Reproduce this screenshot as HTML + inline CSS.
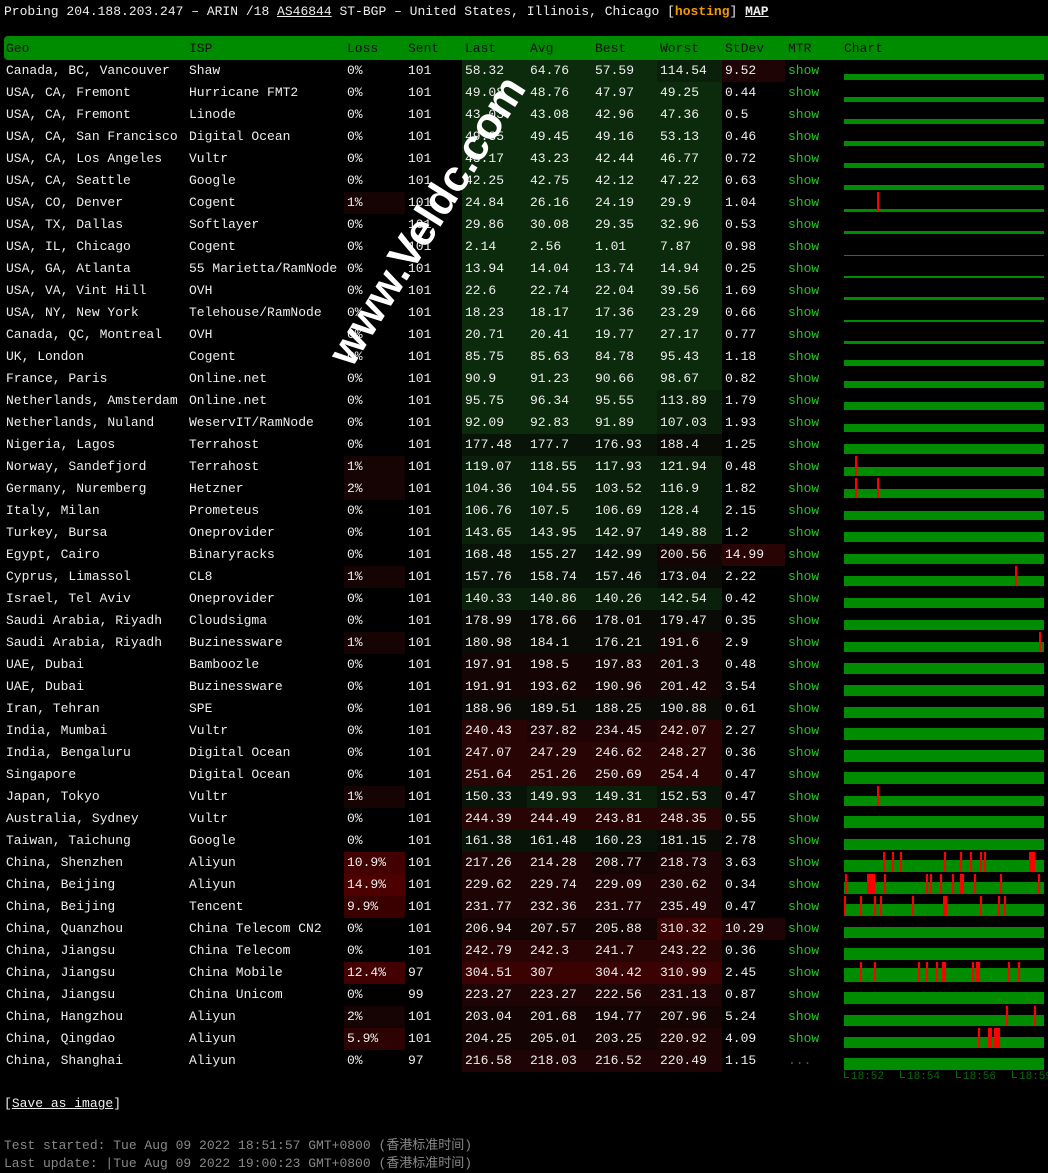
<!DOCTYPE html>
<html><head><meta charset="utf-8"><style>
body{margin:0;background:#000;color:#eee;font-family:"Liberation Mono","Noto Sans CJK SC",monospace;font-size:13px;width:1048px;height:1167px;overflow:hidden;position:relative}
.t{position:absolute;left:4px;top:3px;white-space:pre;line-height:18px}
.t u{text-decoration:underline}
.hs{color:#f39a00;font-weight:bold}
#tb{position:absolute;left:4px;top:36px;width:1044px}
.r{display:flex;height:22px;line-height:22px;white-space:pre}
.h{height:24px;line-height:25px;background:#008c00;color:#111;border-radius:4px 0 0 4px}
.r>span{display:block;padding-left:3px;box-sizing:border-box;overflow:visible}
.c0{width:182px;padding-left:2px!important}.c1{width:158px}.c2{width:61px}.c3{width:57px}
.c4,.c5,.c6,.c7{width:65px}.c8{width:63px}.c9{width:56px;color:#1fc81f}.c10{width:204px;position:relative}
.g3{background:#0c2a0c}.g2{background:#0a200a}.g1{background:#081408}.n{background:#0a0a06}
.r1{background:#140404}.r2{background:#1e0404}.r3{background:#280404}.r4{background:#3a0202}
.l1{background:#160404}.l5{background:#2c0202}.l9{background:#3a0000}.l10{background:#420000}.l14{background:#4c0000}
.b{position:absolute;left:3px;width:200px;bottom:2px;background:#008c00}
.s{position:absolute;bottom:2px;height:20px;width:2px;background:#f00}
.tl{position:absolute;top:1071px;color:#0a6a0a;font-size:11px;padding-left:7px;line-height:12px}
.tl:before{content:"";position:absolute;left:0;top:0;width:4px;height:6px;border-left:1px solid #0a6a0a;border-bottom:1px solid #0a6a0a}
.wm{position:absolute;left:262px;top:196px;transform:rotate(-58deg);font-size:44px;font-weight:bold;color:#fff;font-family:"Liberation Sans",sans-serif;white-space:nowrap}
</style></head><body>
<div class="t">Probing 204.188.203.247 – ARIN /18 <u>AS46844</u> ST-BGP – United States, Illinois, Chicago [<span class="hs">hosting</span>] <b><u>MAP</u></b></div>
<div id="tb">
<div class="r h"><span class="c0">Geo</span><span class="c1">ISP</span><span class="c2">Loss</span><span class="c3">Sent</span><span class="c4">Last</span><span class="c5">Avg</span><span class="c6">Best</span><span class="c7">Worst</span><span class="c8">StDev</span><span class="c9" style="color:#111">MTR</span><span class="c10">Chart</span></div>
<div class="r"><span class="c0">Canada, BC, Vancouver</span><span class="c1">Shaw</span><span class="c2">0%</span><span class="c3">101</span><span class="c4 g3">58.32</span><span class="c5 g3">64.76</span><span class="c6 g3">57.59</span><span class="c7 g2">114.54</span><span class="c8 r2">9.52</span><span class="c9">show</span><span class="c10"><i class="b" style="height:6px"></i></span></div>
<div class="r"><span class="c0">USA, CA, Fremont</span><span class="c1">Hurricane FMT2</span><span class="c2">0%</span><span class="c3">101</span><span class="c4 g3">49.08</span><span class="c5 g3">48.76</span><span class="c6 g3">47.97</span><span class="c7 g3">49.25</span><span class="c8">0.44</span><span class="c9">show</span><span class="c10"><i class="b" style="height:5px"></i></span></div>
<div class="r"><span class="c0">USA, CA, Fremont</span><span class="c1">Linode</span><span class="c2">0%</span><span class="c3">101</span><span class="c4 g3">43.03</span><span class="c5 g3">43.08</span><span class="c6 g3">42.96</span><span class="c7 g3">47.36</span><span class="c8">0.5</span><span class="c9">show</span><span class="c10"><i class="b" style="height:5px"></i></span></div>
<div class="r"><span class="c0">USA, CA, San Francisco</span><span class="c1">Digital Ocean</span><span class="c2">0%</span><span class="c3">101</span><span class="c4 g3">49.35</span><span class="c5 g3">49.45</span><span class="c6 g3">49.16</span><span class="c7 g3">53.13</span><span class="c8">0.46</span><span class="c9">show</span><span class="c10"><i class="b" style="height:5px"></i></span></div>
<div class="r"><span class="c0">USA, CA, Los Angeles</span><span class="c1">Vultr</span><span class="c2">0%</span><span class="c3">101</span><span class="c4 g3">43.17</span><span class="c5 g3">43.23</span><span class="c6 g3">42.44</span><span class="c7 g3">46.77</span><span class="c8">0.72</span><span class="c9">show</span><span class="c10"><i class="b" style="height:5px"></i></span></div>
<div class="r"><span class="c0">USA, CA, Seattle</span><span class="c1">Google</span><span class="c2">0%</span><span class="c3">101</span><span class="c4 g3">42.25</span><span class="c5 g3">42.75</span><span class="c6 g3">42.12</span><span class="c7 g3">47.22</span><span class="c8">0.63</span><span class="c9">show</span><span class="c10"><i class="b" style="height:5px"></i></span></div>
<div class="r"><span class="c0">USA, CO, Denver</span><span class="c1">Cogent</span><span class="c2 l1">1%</span><span class="c3">101</span><span class="c4 g3">24.84</span><span class="c5 g3">26.16</span><span class="c6 g3">24.19</span><span class="c7 g3">29.9</span><span class="c8">1.04</span><span class="c9">show</span><span class="c10"><i class="b" style="height:3px"></i><i class="s" style="left:36px"></i></span></div>
<div class="r"><span class="c0">USA, TX, Dallas</span><span class="c1">Softlayer</span><span class="c2">0%</span><span class="c3">101</span><span class="c4 g3">29.86</span><span class="c5 g3">30.08</span><span class="c6 g3">29.35</span><span class="c7 g3">32.96</span><span class="c8">0.53</span><span class="c9">show</span><span class="c10"><i class="b" style="height:3px"></i></span></div>
<div class="r"><span class="c0">USA, IL, Chicago</span><span class="c1">Cogent</span><span class="c2">0%</span><span class="c3">101</span><span class="c4 g3">2.14</span><span class="c5 g3">2.56</span><span class="c6 g3">1.01</span><span class="c7 g3">7.87</span><span class="c8">0.98</span><span class="c9">show</span><span class="c10"><i class="b" style="height:1px"></i></span></div>
<div class="r"><span class="c0">USA, GA, Atlanta</span><span class="c1">55 Marietta/RamNode</span><span class="c2">0%</span><span class="c3">101</span><span class="c4 g3">13.94</span><span class="c5 g3">14.04</span><span class="c6 g3">13.74</span><span class="c7 g3">14.94</span><span class="c8">0.25</span><span class="c9">show</span><span class="c10"><i class="b" style="height:2px"></i></span></div>
<div class="r"><span class="c0">USA, VA, Vint Hill</span><span class="c1">OVH</span><span class="c2">0%</span><span class="c3">101</span><span class="c4 g3">22.6</span><span class="c5 g3">22.74</span><span class="c6 g3">22.04</span><span class="c7 g3">39.56</span><span class="c8">1.69</span><span class="c9">show</span><span class="c10"><i class="b" style="height:3px"></i></span></div>
<div class="r"><span class="c0">USA, NY, New York</span><span class="c1">Telehouse/RamNode</span><span class="c2">0%</span><span class="c3">101</span><span class="c4 g3">18.23</span><span class="c5 g3">18.17</span><span class="c6 g3">17.36</span><span class="c7 g3">23.29</span><span class="c8">0.66</span><span class="c9">show</span><span class="c10"><i class="b" style="height:2px"></i></span></div>
<div class="r"><span class="c0">Canada, QC, Montreal</span><span class="c1">OVH</span><span class="c2">0%</span><span class="c3">101</span><span class="c4 g3">20.71</span><span class="c5 g3">20.41</span><span class="c6 g3">19.77</span><span class="c7 g3">27.17</span><span class="c8">0.77</span><span class="c9">show</span><span class="c10"><i class="b" style="height:3px"></i></span></div>
<div class="r"><span class="c0">UK, London</span><span class="c1">Cogent</span><span class="c2">0%</span><span class="c3">101</span><span class="c4 g3">85.75</span><span class="c5 g3">85.63</span><span class="c6 g3">84.78</span><span class="c7 g3">95.43</span><span class="c8">1.18</span><span class="c9">show</span><span class="c10"><i class="b" style="height:6px"></i></span></div>
<div class="r"><span class="c0">France, Paris</span><span class="c1">Online.net</span><span class="c2">0%</span><span class="c3">101</span><span class="c4 g3">90.9</span><span class="c5 g3">91.23</span><span class="c6 g3">90.66</span><span class="c7 g3">98.67</span><span class="c8">0.82</span><span class="c9">show</span><span class="c10"><i class="b" style="height:7px"></i></span></div>
<div class="r"><span class="c0">Netherlands, Amsterdam</span><span class="c1">Online.net</span><span class="c2">0%</span><span class="c3">101</span><span class="c4 g3">95.75</span><span class="c5 g3">96.34</span><span class="c6 g3">95.55</span><span class="c7 g2">113.89</span><span class="c8">1.79</span><span class="c9">show</span><span class="c10"><i class="b" style="height:8px"></i></span></div>
<div class="r"><span class="c0">Netherlands, Nuland</span><span class="c1">WeservIT/RamNode</span><span class="c2">0%</span><span class="c3">101</span><span class="c4 g3">92.09</span><span class="c5 g3">92.83</span><span class="c6 g3">91.89</span><span class="c7 g2">107.03</span><span class="c8">1.93</span><span class="c9">show</span><span class="c10"><i class="b" style="height:8px"></i></span></div>
<div class="r"><span class="c0">Nigeria, Lagos</span><span class="c1">Terrahost</span><span class="c2">0%</span><span class="c3">101</span><span class="c4 g1">177.48</span><span class="c5 g1">177.7</span><span class="c6 g1">176.93</span><span class="c7 n">188.4</span><span class="c8">1.25</span><span class="c9">show</span><span class="c10"><i class="b" style="height:10px"></i></span></div>
<div class="r"><span class="c0">Norway, Sandefjord</span><span class="c1">Terrahost</span><span class="c2 l1">1%</span><span class="c3">101</span><span class="c4 g2">119.07</span><span class="c5 g2">118.55</span><span class="c6 g2">117.93</span><span class="c7 g2">121.94</span><span class="c8">0.48</span><span class="c9">show</span><span class="c10"><i class="b" style="height:9px"></i><i class="s" style="left:14px"></i></span></div>
<div class="r"><span class="c0">Germany, Nuremberg</span><span class="c1">Hetzner</span><span class="c2 l1">2%</span><span class="c3">101</span><span class="c4 g2">104.36</span><span class="c5 g2">104.55</span><span class="c6 g2">103.52</span><span class="c7 g2">116.9</span><span class="c8">1.82</span><span class="c9">show</span><span class="c10"><i class="b" style="height:9px"></i><i class="s" style="left:14px"></i><i class="s" style="left:36px"></i></span></div>
<div class="r"><span class="c0">Italy, Milan</span><span class="c1">Prometeus</span><span class="c2">0%</span><span class="c3">101</span><span class="c4 g2">106.76</span><span class="c5 g2">107.5</span><span class="c6 g2">106.69</span><span class="c7 g2">128.4</span><span class="c8">2.15</span><span class="c9">show</span><span class="c10"><i class="b" style="height:9px"></i></span></div>
<div class="r"><span class="c0">Turkey, Bursa</span><span class="c1">Oneprovider</span><span class="c2">0%</span><span class="c3">101</span><span class="c4 g2">143.65</span><span class="c5 g2">143.95</span><span class="c6 g2">142.97</span><span class="c7 g2">149.88</span><span class="c8">1.2</span><span class="c9">show</span><span class="c10"><i class="b" style="height:10px"></i></span></div>
<div class="r"><span class="c0">Egypt, Cairo</span><span class="c1">Binaryracks</span><span class="c2">0%</span><span class="c3">101</span><span class="c4 g1">168.48</span><span class="c5 g1">155.27</span><span class="c6 g1">142.99</span><span class="c7 r1">200.56</span><span class="c8 r3">14.99</span><span class="c9">show</span><span class="c10"><i class="b" style="height:10px"></i></span></div>
<div class="r"><span class="c0">Cyprus, Limassol</span><span class="c1">CL8</span><span class="c2 l1">1%</span><span class="c3">101</span><span class="c4 g1">157.76</span><span class="c5 g1">158.74</span><span class="c6 g1">157.46</span><span class="c7 n">173.04</span><span class="c8">2.22</span><span class="c9">show</span><span class="c10"><i class="b" style="height:10px"></i><i class="s" style="left:174px"></i></span></div>
<div class="r"><span class="c0">Israel, Tel Aviv</span><span class="c1">Oneprovider</span><span class="c2">0%</span><span class="c3">101</span><span class="c4 g2">140.33</span><span class="c5 g2">140.86</span><span class="c6 g2">140.26</span><span class="c7 g2">142.54</span><span class="c8">0.42</span><span class="c9">show</span><span class="c10"><i class="b" style="height:10px"></i></span></div>
<div class="r"><span class="c0">Saudi Arabia, Riyadh</span><span class="c1">Cloudsigma</span><span class="c2">0%</span><span class="c3">101</span><span class="c4 n">178.99</span><span class="c5 n">178.66</span><span class="c6 n">178.01</span><span class="c7 n">179.47</span><span class="c8">0.35</span><span class="c9">show</span><span class="c10"><i class="b" style="height:10px"></i></span></div>
<div class="r"><span class="c0">Saudi Arabia, Riyadh</span><span class="c1">Buzinessware</span><span class="c2 l1">1%</span><span class="c3">101</span><span class="c4 n">180.98</span><span class="c5 n">184.1</span><span class="c6 n">176.21</span><span class="c7 r1">191.6</span><span class="c8">2.9</span><span class="c9">show</span><span class="c10"><i class="b" style="height:10px"></i><i class="s" style="left:198px"></i></span></div>
<div class="r"><span class="c0">UAE, Dubai</span><span class="c1">Bamboozle</span><span class="c2">0%</span><span class="c3">101</span><span class="c4 r1">197.91</span><span class="c5 r1">198.5</span><span class="c6 r1">197.83</span><span class="c7 r1">201.3</span><span class="c8">0.48</span><span class="c9">show</span><span class="c10"><i class="b" style="height:11px"></i></span></div>
<div class="r"><span class="c0">UAE, Dubai</span><span class="c1">Buzinessware</span><span class="c2">0%</span><span class="c3">101</span><span class="c4 r1">191.91</span><span class="c5 r1">193.62</span><span class="c6 r1">190.96</span><span class="c7 r1">201.42</span><span class="c8">3.54</span><span class="c9">show</span><span class="c10"><i class="b" style="height:11px"></i></span></div>
<div class="r"><span class="c0">Iran, Tehran</span><span class="c1">SPE</span><span class="c2">0%</span><span class="c3">101</span><span class="c4 n">188.96</span><span class="c5 n">189.51</span><span class="c6 n">188.25</span><span class="c7 n">190.88</span><span class="c8">0.61</span><span class="c9">show</span><span class="c10"><i class="b" style="height:11px"></i></span></div>
<div class="r"><span class="c0">India, Mumbai</span><span class="c1">Vultr</span><span class="c2">0%</span><span class="c3">101</span><span class="c4 r3">240.43</span><span class="c5 r2">237.82</span><span class="c6 r2">234.45</span><span class="c7 r3">242.07</span><span class="c8">2.27</span><span class="c9">show</span><span class="c10"><i class="b" style="height:12px"></i></span></div>
<div class="r"><span class="c0">India, Bengaluru</span><span class="c1">Digital Ocean</span><span class="c2">0%</span><span class="c3">101</span><span class="c4 r3">247.07</span><span class="c5 r3">247.29</span><span class="c6 r3">246.62</span><span class="c7 r3">248.27</span><span class="c8">0.36</span><span class="c9">show</span><span class="c10"><i class="b" style="height:12px"></i></span></div>
<div class="r"><span class="c0">Singapore</span><span class="c1">Digital Ocean</span><span class="c2">0%</span><span class="c3">101</span><span class="c4 r3">251.64</span><span class="c5 r3">251.26</span><span class="c6 r3">250.69</span><span class="c7 r3">254.4</span><span class="c8">0.47</span><span class="c9">show</span><span class="c10"><i class="b" style="height:12px"></i></span></div>
<div class="r"><span class="c0">Japan, Tokyo</span><span class="c1">Vultr</span><span class="c2 l1">1%</span><span class="c3">101</span><span class="c4 g1">150.33</span><span class="c5 g2">149.93</span><span class="c6 g2">149.31</span><span class="c7 g1">152.53</span><span class="c8">0.47</span><span class="c9">show</span><span class="c10"><i class="b" style="height:10px"></i><i class="s" style="left:36px"></i></span></div>
<div class="r"><span class="c0">Australia, Sydney</span><span class="c1">Vultr</span><span class="c2">0%</span><span class="c3">101</span><span class="c4 r3">244.39</span><span class="c5 r3">244.49</span><span class="c6 r3">243.81</span><span class="c7 r3">248.35</span><span class="c8">0.55</span><span class="c9">show</span><span class="c10"><i class="b" style="height:12px"></i></span></div>
<div class="r"><span class="c0">Taiwan, Taichung</span><span class="c1">Google</span><span class="c2">0%</span><span class="c3">101</span><span class="c4 g1">161.38</span><span class="c5 g1">161.48</span><span class="c6 g1">160.23</span><span class="c7 n">181.15</span><span class="c8">2.78</span><span class="c9">show</span><span class="c10"><i class="b" style="height:11px"></i></span></div>
<div class="r"><span class="c0">China, Shenzhen</span><span class="c1">Aliyun</span><span class="c2 l10">10.9%</span><span class="c3">101</span><span class="c4 r2">217.26</span><span class="c5 r2">214.28</span><span class="c6 r1">208.77</span><span class="c7 r2">218.73</span><span class="c8">3.63</span><span class="c9">show</span><span class="c10"><i class="b" style="height:12px"></i><i class="s" style="left:42px"></i><i class="s" style="left:51px"></i><i class="s" style="left:59px"></i><i class="s" style="left:103px"></i><i class="s" style="left:119px"></i><i class="s" style="left:129px"></i><i class="s" style="left:139px"></i><i class="s" style="left:143px"></i><i class="s" style="left:188px;width:6px"></i></span></div>
<div class="r"><span class="c0">China, Beijing</span><span class="c1">Aliyun</span><span class="c2 l14">14.9%</span><span class="c3">101</span><span class="c4 r2">229.62</span><span class="c5 r2">229.74</span><span class="c6 r2">229.09</span><span class="c7 r2">230.62</span><span class="c8">0.34</span><span class="c9">show</span><span class="c10"><i class="b" style="height:12px"></i><i class="s" style="left:4px"></i><i class="s" style="left:26px;width:8px"></i><i class="s" style="left:43px"></i><i class="s" style="left:85px"></i><i class="s" style="left:89px"></i><i class="s" style="left:99px"></i><i class="s" style="left:111px"></i><i class="s" style="left:119px;width:4px"></i><i class="s" style="left:133px"></i><i class="s" style="left:159px"></i><i class="s" style="left:197px"></i></span></div>
<div class="r"><span class="c0">China, Beijing</span><span class="c1">Tencent</span><span class="c2 l9">9.9%</span><span class="c3">101</span><span class="c4 r2">231.77</span><span class="c5 r2">232.36</span><span class="c6 r2">231.77</span><span class="c7 r2">235.49</span><span class="c8">0.47</span><span class="c9">show</span><span class="c10"><i class="b" style="height:12px"></i><i class="s" style="left:3px"></i><i class="s" style="left:19px"></i><i class="s" style="left:33px"></i><i class="s" style="left:39px"></i><i class="s" style="left:71px"></i><i class="s" style="left:102px;width:4px"></i><i class="s" style="left:139px"></i><i class="s" style="left:157px"></i><i class="s" style="left:163px"></i></span></div>
<div class="r"><span class="c0">China, Quanzhou</span><span class="c1">China Telecom CN2</span><span class="c2">0%</span><span class="c3">101</span><span class="c4 r1">206.94</span><span class="c5 r1">207.57</span><span class="c6 r1">205.88</span><span class="c7 r4">310.32</span><span class="c8 r2">10.29</span><span class="c9">show</span><span class="c10"><i class="b" style="height:11px"></i></span></div>
<div class="r"><span class="c0">China, Jiangsu</span><span class="c1">China Telecom</span><span class="c2">0%</span><span class="c3">101</span><span class="c4 r3">242.79</span><span class="c5 r3">242.3</span><span class="c6 r3">241.7</span><span class="c7 r3">243.22</span><span class="c8">0.36</span><span class="c9">show</span><span class="c10"><i class="b" style="height:12px"></i></span></div>
<div class="r"><span class="c0">China, Jiangsu</span><span class="c1">China Mobile</span><span class="c2 l10">12.4%</span><span class="c3">97</span><span class="c4 r4">304.51</span><span class="c5 r4">307</span><span class="c6 r4">304.42</span><span class="c7 r4">310.99</span><span class="c8">2.45</span><span class="c9">show</span><span class="c10"><i class="b" style="height:14px"></i><i class="s" style="left:19px"></i><i class="s" style="left:33px"></i><i class="s" style="left:77px"></i><i class="s" style="left:85px"></i><i class="s" style="left:95px"></i><i class="s" style="left:101px;width:4px"></i><i class="s" style="left:131px"></i><i class="s" style="left:135px;width:4px"></i><i class="s" style="left:167px"></i><i class="s" style="left:177px"></i></span></div>
<div class="r"><span class="c0">China, Jiangsu</span><span class="c1">China Unicom</span><span class="c2">0%</span><span class="c3">99</span><span class="c4 r2">223.27</span><span class="c5 r2">223.27</span><span class="c6 r2">222.56</span><span class="c7 r2">231.13</span><span class="c8">0.87</span><span class="c9">show</span><span class="c10"><i class="b" style="height:12px"></i></span></div>
<div class="r"><span class="c0">China, Hangzhou</span><span class="c1">Aliyun</span><span class="c2 l1">2%</span><span class="c3">101</span><span class="c4 r1">203.04</span><span class="c5 r1">201.68</span><span class="c6 r1">194.77</span><span class="c7 r1">207.96</span><span class="c8">5.24</span><span class="c9">show</span><span class="c10"><i class="b" style="height:11px"></i><i class="s" style="left:165px"></i><i class="s" style="left:193px"></i></span></div>
<div class="r"><span class="c0">China, Qingdao</span><span class="c1">Aliyun</span><span class="c2 l5">5.9%</span><span class="c3">101</span><span class="c4 r1">204.25</span><span class="c5 r1">205.01</span><span class="c6 r1">203.25</span><span class="c7 r2">220.92</span><span class="c8">4.09</span><span class="c9">show</span><span class="c10"><i class="b" style="height:11px"></i><i class="s" style="left:137px"></i><i class="s" style="left:147px;width:4px"></i><i class="s" style="left:153px;width:6px"></i></span></div>
<div class="r"><span class="c0">China, Shanghai</span><span class="c1">Aliyun</span><span class="c2">0%</span><span class="c3">97</span><span class="c4 r2">216.58</span><span class="c5 r2">218.03</span><span class="c6 r2">216.52</span><span class="c7 r2">220.49</span><span class="c8">1.15</span><span class="c9" style="color:#555">...</span><span class="c10"><i class="b" style="height:12px"></i></span></div>
</div>
<div class="tl" style="left:844px">18:52</div><div class="tl" style="left:900px">18:54</div><div class="tl" style="left:956px">18:56</div><div class="tl" style="left:1012px">18:59</div>
<div class="wm">www.Veldc.com</div>
<div style="position:absolute;left:4px;top:1095px;line-height:18px">[<u>Save as image</u>]</div>
<div style="position:absolute;left:4px;top:1137px;line-height:18px;color:#888;white-space:pre">Test started: Tue Aug 09 2022 18:51:57 GMT+0800 (香港标准时间)
Last update: |Tue Aug 09 2022 19:00:23 GMT+0800 (香港标准时间)</div>
</body></html>
